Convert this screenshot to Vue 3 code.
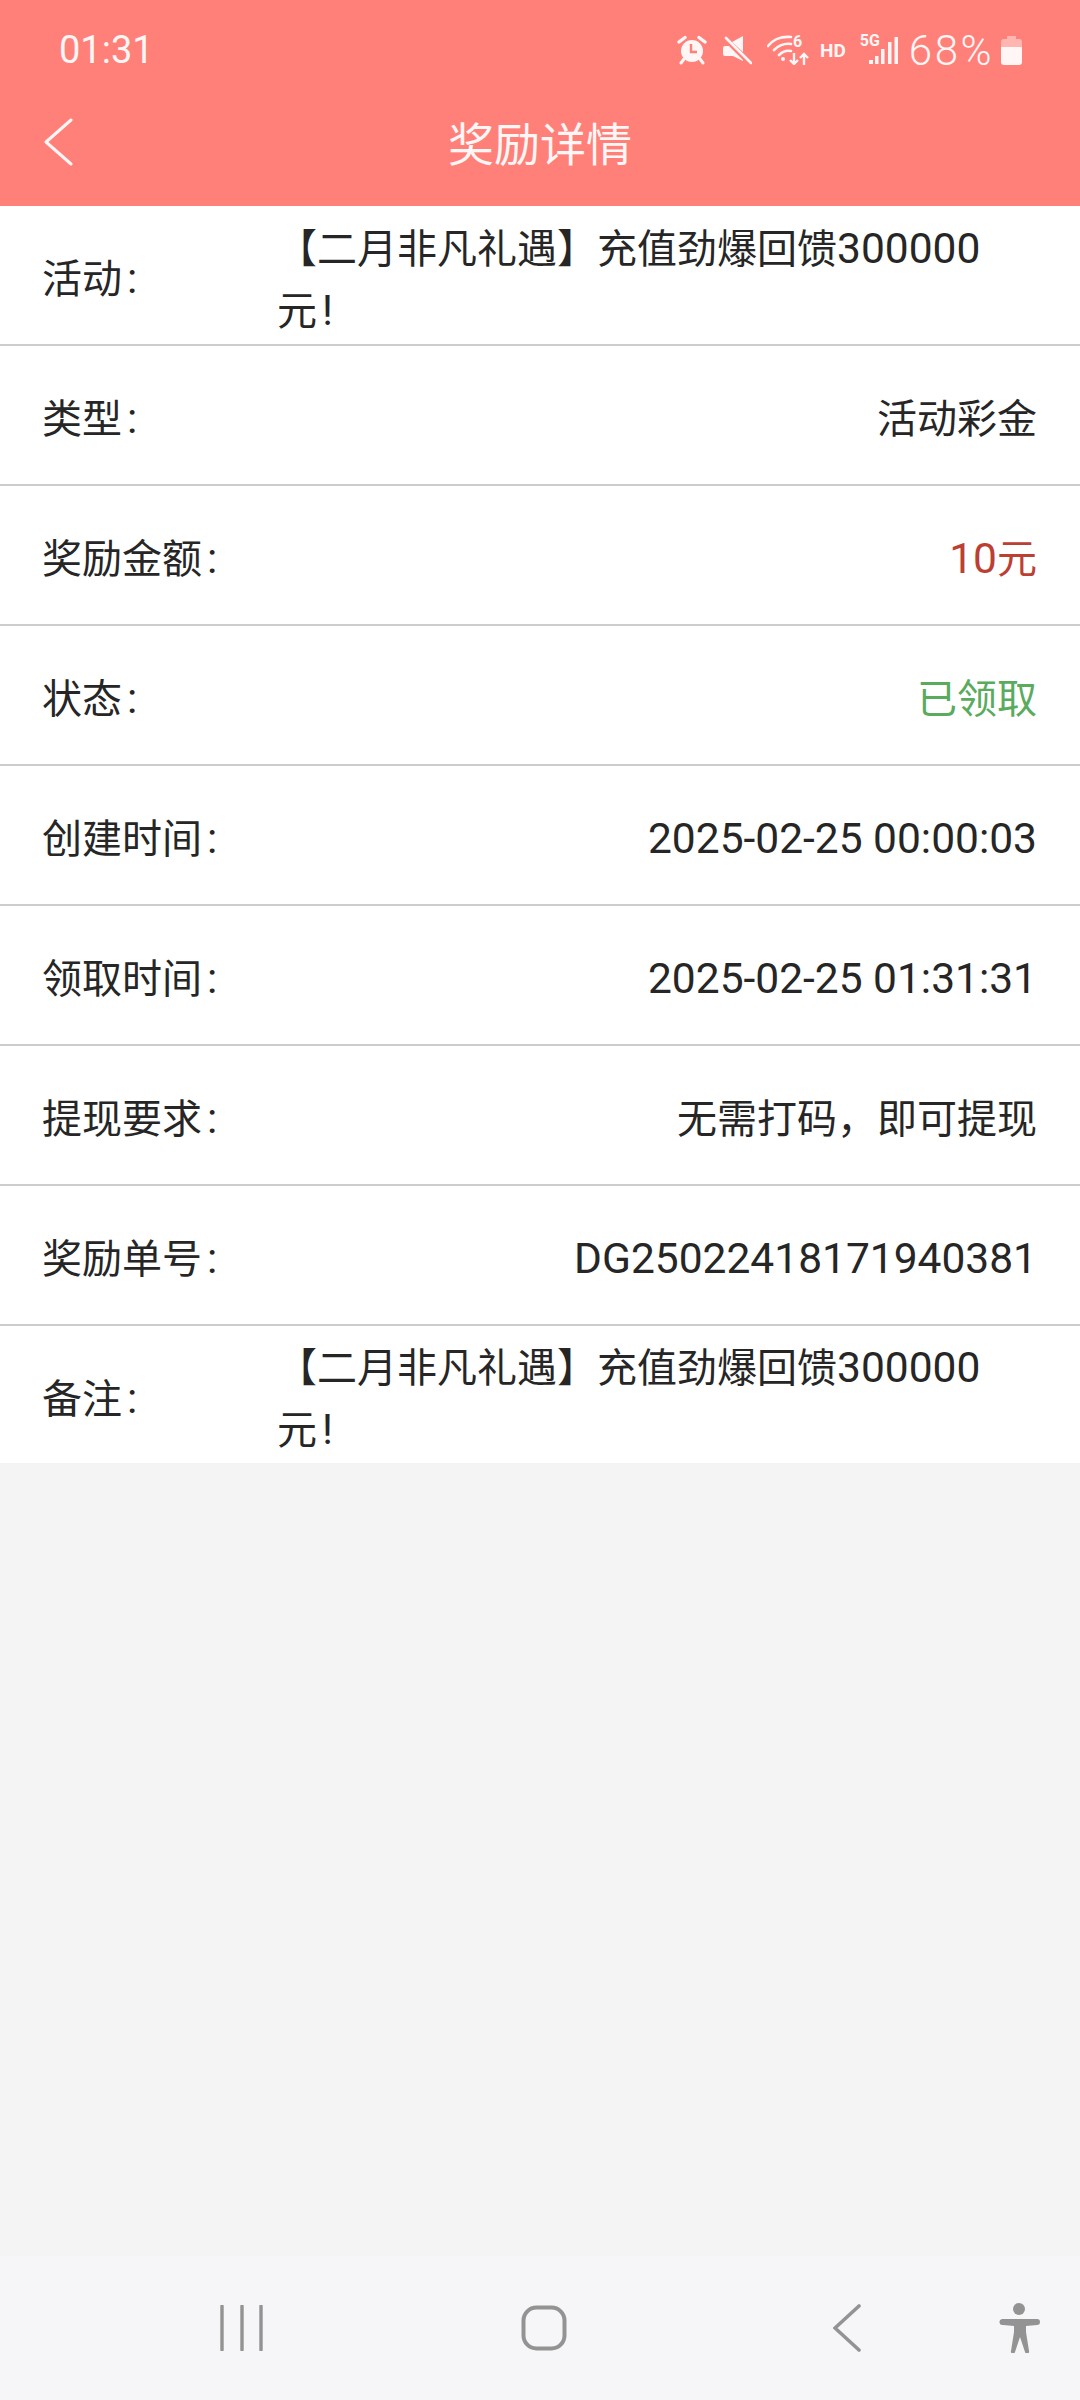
<script setup>
const notice = '【二月非凡礼遇】充值劲爆回馈300000元!'

const rows = [
  { label: '活动:', value: notice, long: true },
  { label: '类型:', value: '活动彩金' },
  { label: '奖励金额:', value: '10元', tone: 'red' },
  { label: '状态:', value: '已领取', tone: 'green' },
  { label: '创建时间:', value: '2025-02-25 00:00:03' },
  { label: '领取时间:', value: '2025-02-25 01:31:31' },
  { label: '提现要求:', value: '无需打码\uFF0C即可提现' },
  { label: '奖励单号:', value: 'DG25022418171940381' },
  { label: '备注:', value: notice, long: true }
]

// 숫자/영문은 CJK보다 조금 크게 보여서 따로 나눈다
const parts = (text) => text.split(/([0-9A-Za-z:!\- ]+)/).filter(Boolean).map((str) => ({
  str,
  cls: {
    lat: /^[0-9A-Za-z:!\- ]+$/.test(str),
    gap: str === ':' || str === '!'
  }
}))
</script>

<template>
  <div class="page">
    <header class="head">
      <div class="status">
        <span class="time">01:31</span>
        <div class="status-right">
          <svg width="30" height="30" viewBox="0 0 30 30">
            <circle cx="15" cy="16" r="11" fill="#fff6f5" />
            <path d="M14 9v8h6" fill="none" stroke="#ff8079" stroke-width="2.4" />
            <path d="M2 7l6-4.500M28 7l-6-4.500" stroke="#fff6f5" stroke-width="3.400" stroke-linecap="round" />
            <path d="M7 24l-3 4M23 24l3 4" stroke="#fff6f5" stroke-width="3" stroke-linecap="round" />
          </svg>
          <svg class="ic-mute" width="30" height="30" viewBox="0 0 30 30">
            <path d="M21 1v16L10 7zM1 13q0-2 2-2h4l14 14v1l-10-5H3q-2 0-2-2z" fill="#fff6f5" />
            <path d="M4 3l25 25" stroke="#fff6f5" stroke-width="2.600" stroke-linecap="round" />
          </svg>
          <div class="wifi">
            <svg width="42" height="30" viewBox="0 0 42 30">
              <path d="M1 11C6 5 12 1 24 2M7 15c4-4 9-7 17-6M12 20c3-3 7-5 12-4" fill="none" stroke="#fff6f5" stroke-width="2.600" stroke-linecap="round" />
              <circle cx="16" cy="24" r="2" fill="#fff6f5" />
              <path d="M27 18v11M23 25l4 4 4-4M37 30V19M33 23l4-4 4 4" fill="none" stroke="#fff6f5" stroke-width="2.400" />
            </svg>
            <span class="six">6</span>
          </div>
          <span class="hd">HD</span>
          <div class="signal">
            <span class="five">5G</span>
            <svg width="30" height="30" viewBox="0 0 30 30">
              <path d="M1 25h4v4H1zM7 21h3.500v8H7zM13 14h3.500v15H13zM20 7h3.500v22H20zM26.500 2H30v27h-3.500z" fill="#fff6f5" />
            </svg>
          </div>
          <span class="pct">68%</span>
          <svg class="ic-batt" width="21" height="29" viewBox="0 0 21 29">
            <path d="M6 0h9v3h3a3 3 0 0 1 3 3v6H0V6a3 3 0 0 1 3-3h3z" fill="#ffb5b0" />
            <path d="M0 11h21v15a3 3 0 0 1-3 3H3a3 3 0 0 1-3-3z" fill="#fff6f5" />
          </svg>
        </div>
      </div>
      <div class="bar">
        <svg class="back" width="30" height="48" viewBox="0 0 30 48">
          <path d="M27 2L2 24l25 22" fill="none" stroke="#fff6f5" stroke-width="3" stroke-linecap="round" stroke-linejoin="round" />
        </svg>
        <h1 class="title">奖励详情</h1>
      </div>
    </header>

    <section class="list">
      <div v-for="row in rows" :key="row.label" class="row">
        <span class="label">
          <span v-for="(p, i) in parts(row.label)" :key="i" :class="p.cls">{{ p.str }}</span>
        </span>
        <span :class="['value', row.tone, { long: row.long }]">
          <span v-for="(p, i) in parts(row.value)" :key="i" :class="p.cls">{{ p.str }}</span>
        </span>
      </div>
    </section>

    <div class="empty"></div>

    <nav class="nav">
      <svg class="n-recent" width="44" height="46" viewBox="0 0 44 46">
        <path d="M3 1v44M23 1v44M42 1v44" stroke="#939393" stroke-width="3.400" stroke-linecap="round" />
      </svg>
      <svg class="n-home" width="46" height="46" viewBox="0 0 46 46">
        <rect x="2.500" y="2.500" width="41" height="41" rx="13" fill="none" stroke="#939393" stroke-width="4" />
      </svg>
      <svg class="n-back" width="28" height="48" viewBox="0 0 28 48">
        <path d="M26 2L2 24l24 22" fill="none" stroke="#939393" stroke-width="3.600" stroke-linecap="round" />
      </svg>
      <svg class="n-access" width="42" height="50" viewBox="0 0 42 50">
        <ellipse cx="21" cy="6" rx="6" ry="6" fill="#939393" />
        <path d="M3 16h36a2.500 2.500 0 0 1 0 6l-11 1v6l3 19a2 2 0 0 1-4 1l-5-15-5 15a2 2 0 0 1-4-1l3-19v-6l-11-1a2.500 2.500 0 0 1-1-6z" fill="#939393" />
      </svg>
    </nav>
  </div>
</template>

<style scoped>
.page {
  width: 1080px;
  height: 2400px;
  display: flex;
  flex-direction: column;
  background: #f4f4f5;
  font-family: Roboto, "Noto Sans CJK SC", sans-serif;
  color: #262626;
}

.head {
  height: 206px;
  background: #ff8079;
  color: #fff6f5;
}

.status {
  height: 100px;
  display: flex;
  align-items: center;
  justify-content: space-between;
  padding: 0 58px 0 59px;
}

.time {
  font-size: 38px;
  font-weight: 400;
}

.status-right {
  display: flex;
  align-items: center;
}

.status-right svg {
  flex: none;
  display: block;
}

.ic-mute {
  margin-left: 15px;
}

.wifi {
  position: relative;
  margin-left: 15px;
}

.six {
  position: absolute;
  left: 26px;
  top: -2px;
  font-size: 16px;
  line-height: 18px;
  font-weight: 700;
}

.hd {
  margin-left: 11px;
  font-size: 19px;
  font-weight: 700;
}

.signal {
  position: relative;
  margin-left: 14px;
  padding-left: 8px;
}

.five {
  position: absolute;
  left: 0;
  top: -3px;
  font-size: 16px;
  line-height: 18px;
  font-weight: 700;
}

.pct {
  margin-left: 11px;
  font-size: 42px;
  letter-spacing: 2.500px;
  font-weight: 300;
}

.ic-batt {
  margin-left: 7px;
}

.bar {
  position: relative;
  height: 106px;
  display: flex;
  align-items: center;
  justify-content: center;
  padding-bottom: 24px;
  box-sizing: border-box;
}

.back {
  position: absolute;
  left: 44px;
  top: 18px;
}

.title {
  margin: 0;
  font-size: 46px;
  font-weight: 400;
}

.list {
  background: #fff;
}

.row {
  height: 140px;
  box-sizing: border-box;
  display: flex;
  align-items: center;
  justify-content: space-between;
  padding: 9px 43px 0 42px;
  border-bottom: 2px solid #ccc;
  font-size: 40px;
  line-height: 60px;
}

.row:last-child {
  height: 137px;
  border-bottom: 0;
}

.label {
  flex: none;
  width: 235px;
}

.value {
  flex: 1;
  text-align: right;
}

.value.long {
  text-align: left;
  line-height: 61px;
  padding-right: 40px;
}

.lat {
  font-size: 42.500px;
}

.gap {
  margin-left: 5px;
}

.value.red {
  color: #bb4033;
}

.value.green {
  color: #5aab5e;
}

.empty {
  flex: 1;
}

.nav {
  position: relative;
  height: 144px;
  background: #f6f6f8;
}

.nav svg {
  position: absolute;
}

.n-recent {
  left: 219px;
  top: 49px;
}

.n-home {
  left: 521px;
  top: 49px;
}

.n-back {
  left: 833px;
  top: 48px;
}

.n-access {
  left: 998px;
  top: 47px;
}
</style>
